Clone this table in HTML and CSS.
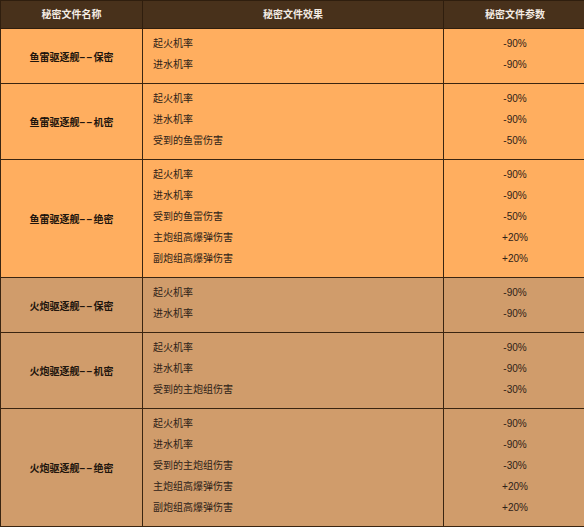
FILE: index.html
```html
<!DOCTYPE html>
<html lang="zh-CN">
<head>
<meta charset="utf-8">
<title>秘密文件</title>
<link rel="stylesheet" href="styles.css">
</head>
<body>
<table class="secret-table">
  <colgroup>
    <col class="col-name">
    <col class="col-effect">
    <col class="col-value">
  </colgroup>
  <thead>
    <tr>
      <th>秘密文件名称</th>
      <th>秘密文件效果</th>
      <th>秘密文件参数</th>
    </tr>
  </thead>
  <tbody>
    <tr class="torpedo">
      <td class="name">鱼雷驱逐舰<span class="dash">––</span>保密</td>
      <td class="effect"><p>起火机率</p><p>进水机率</p></td>
      <td class="value"><p>-90%</p><p>-90%</p></td>
    </tr>
    <tr class="torpedo">
      <td class="name">鱼雷驱逐舰<span class="dash">––</span>机密</td>
      <td class="effect"><p>起火机率</p><p>进水机率</p><p>受到的鱼雷伤害</p></td>
      <td class="value"><p>-90%</p><p>-90%</p><p>-50%</p></td>
    </tr>
    <tr class="torpedo">
      <td class="name">鱼雷驱逐舰<span class="dash">––</span>绝密</td>
      <td class="effect"><p>起火机率</p><p>进水机率</p><p>受到的鱼雷伤害</p><p>主炮组高爆弹伤害</p><p>副炮组高爆弹伤害</p></td>
      <td class="value"><p>-90%</p><p>-90%</p><p>-50%</p><p>+20%</p><p>+20%</p></td>
    </tr>
    <tr class="gun">
      <td class="name">火炮驱逐舰<span class="dash">––</span>保密</td>
      <td class="effect"><p>起火机率</p><p>进水机率</p></td>
      <td class="value"><p>-90%</p><p>-90%</p></td>
    </tr>
    <tr class="gun">
      <td class="name">火炮驱逐舰<span class="dash">––</span>机密</td>
      <td class="effect"><p>起火机率</p><p>进水机率</p><p>受到的主炮组伤害</p></td>
      <td class="value"><p>-90%</p><p>-90%</p><p>-30%</p></td>
    </tr>
    <tr class="gun">
      <td class="name">火炮驱逐舰<span class="dash">––</span>绝密</td>
      <td class="effect"><p>起火机率</p><p>进水机率</p><p>受到的主炮组伤害</p><p>主炮组高爆弹伤害</p><p>副炮组高爆弹伤害</p></td>
      <td class="value"><p>-90%</p><p>-90%</p><p>-30%</p><p>+20%</p><p>+20%</p></td>
    </tr>
  </tbody>
</table>
</body>
</html>
```

FILE: styles.css
```css
html, body {
  margin: 0;
  padding: 0;
  background: #ffffff;
  overflow: hidden;
}

.secret-table {
  width: 586px;
  border-collapse: collapse;
  table-layout: fixed;
  font-family: "Liberation Sans", "Noto Sans CJK SC", sans-serif;
  font-size: 10px;
  color: #2e2218;
  border: 1px solid #2f1e0e;
}

.col-name { width: 142px; }
.col-effect { width: 301px; }
.col-value { width: 143px; }

.secret-table th {
  background: #48311b;
  color: #f4ece4;
  font-weight: bold;
  height: 27px;
  padding: 0;
  line-height: 16px;
  text-align: center;
  vertical-align: middle;
  border: 1px solid #2f1e0e;
}

.secret-table td {
  border: 1px solid #3a2511;
  padding: 4px 10px 8px;
  vertical-align: middle;
}

.secret-table tr.torpedo td { background: #ffae5f; }
.secret-table tr.gun td { background: #d09c6b; }

.secret-table tbody tr { border-top: 1px solid #6e4722; }

.secret-table td.name {
  text-align: center;
  font-weight: bold;
  color: #1e150d;
  padding: 0 4px;
}

.dash {
  letter-spacing: 1.5px;
}

.secret-table td p {
  margin: 0;
  line-height: 21px;
}

.secret-table td.effect { text-align: left; padding-left: 10px; }
.secret-table td.value { text-align: center; }
```
